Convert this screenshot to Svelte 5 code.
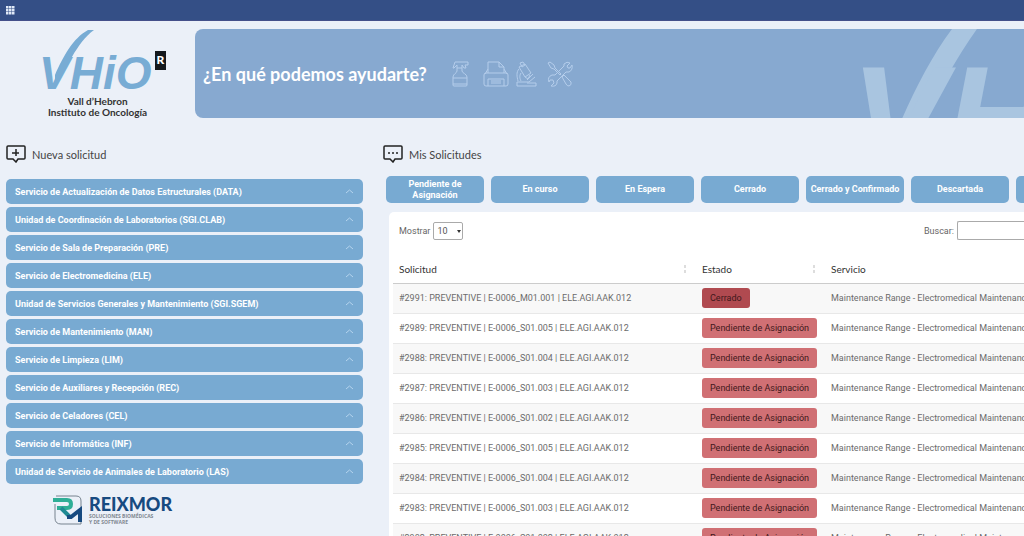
<script lang="ts">
  interface Ticket {
    id: number;
    code: string;
    status: string;
  }

  const services = [
    "Servicio de Actualización de Datos Estructurales (DATA)",
    "Unidad de Coordinación de Laboratorios (SGI.CLAB)",
    "Servicio de Sala de Preparación (PRE)",
    "Servicio de Electromedicina (ELE)",
    "Unidad de Servicios Generales y Mantenimiento (SGI.SGEM)",
    "Servicio de Mantenimiento (MAN)",
    "Servicio de Limpieza (LIM)",
    "Servicio de Auxiliares y Recepción (REC)",
    "Servicio de Celadores (CEL)",
    "Servicio de Informática (INF)",
    "Unidad de Servicio de Animales de Laboratorio (LAS)",
  ];

  const filters = [
    "Pendiente de Asignación",
    "En curso",
    "En Espera",
    "Cerrado",
    "Cerrado y Confirmado",
    "Descartada",
  ];

  const tickets: Ticket[] = [
    { id: 2991, code: "E-0006_M01.001", status: "Cerrado" },
    { id: 2989, code: "E-0006_S01.005", status: "Pendiente de Asignación" },
    { id: 2988, code: "E-0006_S01.004", status: "Pendiente de Asignación" },
    { id: 2987, code: "E-0006_S01.003", status: "Pendiente de Asignación" },
    { id: 2986, code: "E-0006_S01.002", status: "Pendiente de Asignación" },
    { id: 2985, code: "E-0006_S01.005", status: "Pendiente de Asignación" },
    { id: 2984, code: "E-0006_S01.004", status: "Pendiente de Asignación" },
    { id: 2983, code: "E-0006_S01.003", status: "Pendiente de Asignación" },
    { id: 2982, code: "E-0006_S01.002", status: "Pendiente de Asignación" },
  ];

  let pageSize = $state("10");
  let search = $state("");

  let visible = $derived(
    tickets.filter((t) => `${t.id} ${t.code} ${t.status}`.toLowerCase().includes(search.toLowerCase())),
  );
</script>

{#snippet wordmark()}
  <path d="M13 56 C25 40 34 14 52 1 L46 1 C31 9 21 28 13 46 Z" />
  <text x="-3" y="60">VHiO</text>
{/snippet}

<div class="page">
  <nav class="topbar">
    <button class="apps" aria-label="Aplicaciones">
      <svg viewBox="0 0 9 9" width="9" height="9">
        {#each [0, 3, 6] as y}
          {#each [0, 3, 6] as x}
            <rect {x} {y} width="2.5" height="2.5" />
          {/each}
        {/each}
      </svg>
    </button>
  </nav>

  <header class="header">
    <div class="brand">
      <div class="brand-mark">
        <svg class="vhio" viewBox="0 0 112 63" width="112" height="63">{@render wordmark()}</svg>
        <span class="brand-r">R</span>
      </div>
      <p>Vall d’Hebron<br />Instituto de Oncología</p>
    </div>

    <div class="banner">
      <h1>¿En qué podemos ayudarte?</h1>
      <div class="banner-icons">
        <svg viewBox="0 0 26 26">
          <path d="M4 1h13v3h-3l1 3h-2l-2-3v3H6V4L3 7H2l2-6Z M6 7v3C6 12 2 13 2 16v8q0 1 1 1h12q1 0 1-1v-8c0-3-5-4-5-6V7 M2 17h14 M2 23h14" />
        </svg>
        <svg viewBox="0 0 26 26">
          <path d="M5 12V1h11l5 5v6 M16 1v5h5 M5 8L2 13 M21 8l3 5 M3 12h20q2 0 2 2v9q0 2-2 2H3q-2 0-2-2v-9q0-2 2-2Z M5 25v-7h16v7 M8 20h10 M8 22h10" />
        </svg>
        <svg viewBox="0 0 26 26">
          <path d="M5 2l3-1 2 3-3 2Z M4 6l6-3 6 9-6 4Z M10 16l3 2 2-4 M4 8C1 11 2 16 3 20 M6 12c-2 3-1 6 0 8 M2 21h12l6-5 M2 21v4h19v-3h-9 M12 19l6-6" />
        </svg>
        <svg viewBox="0 0 26 26">
          <path d="M1 2l2-1 4 3 1 3 6 6-1 1-6-6-3-1Z M15 16l2-2 7 7q1 3-2 4-2 0-3-2Z M17 3q3-3 6-1l-3 3 1 2 2 0 2-3q1 5-3 7l-3 0-9 9 0 2q-1 4-6 3l3-3-1-3-3 0-1 2q-2-5 3-7l3 0 9-9Z" />
        </svg>
      </div>
      <svg class="vhio watermark" viewBox="0 0 112 63" width="347" height="195" aria-hidden="true">
        {@render wordmark()}
      </svg>
    </div>
  </header>

  <main class="content">
    <section class="new-request">
      <h2>
        <svg viewBox="0 0 20 18" width="20" height="18">
          <path d="M2 1h16q1 0 1 1v11q0 1-1 1h-6l-2 3-3-3H2q-1 0-1-1V2q0-1 1-1Z M10 4v7 M6 8h7" />
        </svg>
        Nueva solicitud
      </h2>
      <div class="services">
        {#each services as service}
          <button class="service">
            <span>{service}</span>
            <svg viewBox="0 0 9 5" width="9" height="5"><path d="M1 4l3.500-3L8 4" /></svg>
          </button>
        {/each}
      </div>
      <a class="vendor" href="#reixmor">
        <svg viewBox="0 0 30 30" width="30" height="30">
          <path d="M3 1h20q5 0 5 5v9 M2 9v14q0 6 6 6h20v-4" fill="none" stroke="#77838f" />
          <path d="M0 5h14q4 0 4 4t-4 4H4" fill="none" stroke="#2fae96" stroke-width="4" />
          <path d="M8 13l9 9" fill="none" stroke="#1f8a93" stroke-width="4" />
          <path d="M14 22h4l9-7v12" fill="none" stroke="#174a80" stroke-width="4" />
        </svg>
        <span class="vendor-text">
          <strong>REIXMOR</strong>
          <small>SOLUCIONES BIOMÉDICAS<br />Y DE SOFTWARE</small>
        </span>
      </a>
    </section>

    <section class="my-requests">
      <h2>
        <svg viewBox="0 0 20 18" width="20" height="18">
          <path d="M2 1h16q1 0 1 1v11q0 1-1 1h-6l-2 3-3-3H2q-1 0-1-1V2q0-1 1-1Z" />
          <path d="M5 8h2 M9 8h2 M13 8h2" />
        </svg>
        Mis Solicitudes
      </h2>
      <div class="filters">
        {#each filters as filter}
          <button>{filter}</button>
        {/each}
        <button aria-label="Todas"></button>
      </div>

      <div class="panel">
        <div class="controls">
          <label>
            Mostrar
            <span class="select">
              <select bind:value={pageSize}>
                <option>10</option>
                <option>25</option>
                <option>50</option>
              </select>
            </span>
          </label>
          <label class="search">
            Buscar:
            <input type="search" bind:value={search} />
          </label>
        </div>

        <table>
          <thead>
            <tr>
              <th class="col-request"><span>Solicitud <i class="sort"></i></span></th>
              <th class="col-status"><span>Estado <i class="sort"></i></span></th>
              <th>Servicio</th>
            </tr>
          </thead>
          <tbody>
            {#each visible as ticket (ticket.id)}
              <tr>
                <td>#{ticket.id}: PREVENTIVE | {ticket.code} | ELE.AGI.AAK.012</td>
                <td>
                  <span class="status" class:closed={ticket.status === "Cerrado"}>{ticket.status}</span>
                </td>
                <td>Maintenance Range - Electromedical Maintenance</td>
              </tr>
            {/each}
          </tbody>
        </table>
      </div>
    </section>
  </main>
</div>

<style>
  :global(body) {
    margin: 0;
    background: #ebf0f8;
  }

  .page {
    height: 100vh;
    overflow: hidden;
    background: #ebf0f8;
    color: #444;
    font-family: Roboto, "Open Sans", sans-serif;
    font-size: 9px;
  }

  button,
  input,
  select {
    font: inherit;
  }

  .topbar {
    display: flex;
    align-items: center;
    height: 21px;
    padding-left: 6px;
    background: #344f86;
    border-bottom: 1px solid #44508a;
    box-sizing: border-box;
  }

  .apps {
    display: flex;
    padding: 0;
    border: 0;
    background: none;
    fill: #dfe9f7;
  }

  .header {
    display: flex;
    padding-top: 8px;
    font-family: Lato, "Open Sans", sans-serif;
  }

  .brand {
    flex: none;
    width: 195px;
    color: #333;
  }

  .brand-mark {
    display: flex;
    align-items: center;
    gap: 1px;
    padding-left: 42px;
  }

  .vhio {
    fill: #78acd4;
    font-family: "Liberation Sans", sans-serif;
    font-size: 46px;
    font-style: italic;
    font-weight: 700;
  }

  .brand-r {
    width: 11px;
    height: 19px;
    background: #15191d;
    color: #fff;
    font-size: 12px;
    font-weight: 900;
    line-height: 17px;
    text-align: center;
  }

  .brand p {
    margin: 4px 0 0;
    font-size: 10px;
    font-weight: 700;
    line-height: 11px;
    text-align: center;
  }

  .banner {
    position: relative;
    display: flex;
    flex: 1;
    align-items: center;
    gap: 24px;
    height: 89px;
    padding-left: 8px;
    overflow: hidden;
    border-radius: 8px 0 0 8px;
    background: #87a9d0;
  }

  .banner h1 {
    margin: 0;
    color: #fff;
    font-size: 18px;
    font-weight: 700;
  }

  .banner-icons {
    display: flex;
    gap: 6px;
  }

  .banner-icons svg {
    width: 26px;
    height: 26px;
    fill: none;
    stroke: #b4cdeb;
  }

  .watermark {
    position: absolute;
    top: -49px;
    right: -183px;
    fill: #a9c5e0;
  }

  .content {
    display: flex;
    gap: 20px;
    padding: 27px 0 0 6px;
  }

  h2 {
    display: flex;
    align-items: center;
    gap: 6px;
    height: 18px;
    margin: 0;
    font-family: Lato, "Open Sans", sans-serif;
    font-size: 11px;
    font-weight: 400;
  }

  h2 svg {
    fill: none;
    stroke: #222;
    stroke-width: 1.5;
  }

  .new-request {
    flex: none;
    width: 357px;
  }

  .services {
    display: flex;
    flex-direction: column;
    gap: 3px;
    margin-top: 16px;
  }

  .service {
    display: flex;
    align-items: center;
    justify-content: space-between;
    height: 25px;
    padding: 0 9px;
    border: 0;
    border-radius: 5px;
    background: #78aad2;
    color: #fff;
    font-weight: 700;
  }

  .service svg {
    fill: none;
    stroke: #b5d4ee;
  }

  .vendor {
    display: flex;
    align-items: center;
    gap: 6px;
    margin: 11px 0 0 47px;
    font-family: Lato, "Open Sans", sans-serif;
    text-decoration: none;
  }

  .vendor-text {
    display: flex;
    flex-direction: column;
  }

  .vendor strong {
    color: #174a80;
    font-size: 18px;
    font-weight: 900;
    line-height: 17px;
  }

  .vendor small {
    color: #7f8790;
    font-family: "Open Sans", sans-serif;
    font-size: 5px;
    font-weight: 700;
    line-height: 6px;
  }

  .my-requests {
    flex: 1;
    min-width: 0;
  }

  .filters {
    display: flex;
    gap: 7px;
    margin-top: 13px;
    padding-left: 3px;
    overflow: hidden;
  }

  .filters button {
    flex: none;
    width: 98px;
    height: 27px;
    padding: 0 4px;
    border: 0;
    border-radius: 5px;
    background: #78aad2;
    color: #fff;
    font-weight: 700;
    line-height: 11px;
  }

  .panel {
    margin: 9px 0 0 6px;
    padding: 9px 0 0 4px;
    overflow: hidden;
    border-radius: 5px 0 0 0;
    background: #fff;
  }

  .controls {
    display: flex;
    justify-content: space-between;
    padding-left: 6px;
    color: #666;
  }

  .controls label {
    display: flex;
    align-items: center;
    gap: 3px;
  }

  .select {
    position: relative;
    display: flex;
  }

  .select::after {
    content: "";
    position: absolute;
    top: 8px;
    right: 2px;
    border: 2px solid transparent;
    border-top: 3px solid #333;
    border-bottom: 0;
    pointer-events: none;
  }

  .controls select {
    width: 30px;
    height: 18px;
    padding: 0 3px;
    appearance: none;
    border: 1px solid #aaa;
    border-radius: 2px;
    background: #fff;
    color: #555;
  }

  .controls input {
    width: 67px;
    height: 19px;
    box-sizing: border-box;
    border: 1px solid #aaa;
    border-right: 0;
    border-radius: 2px 0 0 2px;
    background: #fff;
  }

  table {
    width: 100%;
    margin-top: 16px;
    border-collapse: collapse;
    table-layout: fixed;
  }

  .col-request {
    width: 303px;
  }

  .col-status {
    width: 129px;
  }

  th,
  td {
    box-sizing: border-box;
    padding: 0 6px;
    text-align: left;
    white-space: nowrap;
  }

  th {
    height: 27px;
    border-bottom: 1px solid #ccc;
    color: #333;
    font-family: Lato, "Open Sans", sans-serif;
    font-size: 10px;
    font-weight: 400;
  }

  th span {
    display: flex;
    align-items: center;
    justify-content: space-between;
  }

  .sort {
    width: 2px;
    height: 8px;
    margin-right: 4px;
    border: solid #ddd;
    border-width: 3px 0;
    box-sizing: border-box;
  }

  td {
    height: 30px;
    border-bottom: 1px solid #e8e8e8;
    color: #6c6c6c;
  }

  tbody tr:nth-child(odd) {
    background: #f8f8f8;
  }

  .status {
    display: inline-block;
    padding: 0 8px;
    border-radius: 3px;
    background: #d07074;
    color: #40181b;
    line-height: 20px;
  }

  .status.closed {
    background: #b04a50;
  }
</style>
